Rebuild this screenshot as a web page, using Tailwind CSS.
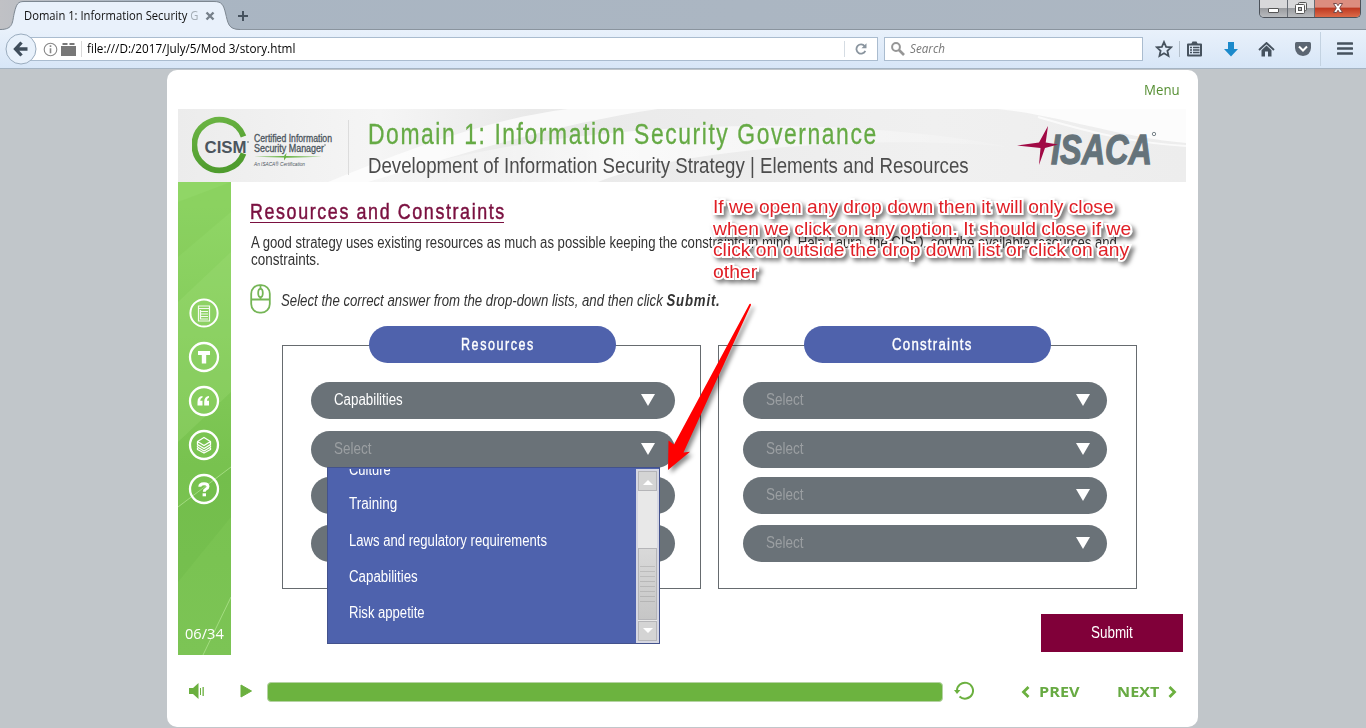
<!DOCTYPE html>
<html lang="en">
<head>
<meta charset="utf-8">
<title>Domain 1: Information Security Governance</title>
<script src="https://cdn.jsdelivr.net/npm/@tailwindcss/browser@4"></script>
</head>
<body class="w-[1366px] h-[728px] overflow-hidden bg-[#c1c6ca] font-['Liberation_Sans_Narrow','Liberation_Sans',sans-serif]">
<!-- Tab strip -->
<header class="relative flex h-[30px] bg-linear-to-r from-[#c0c1c5] via-[#a9b5c2] via-10% to-[#adb7c2] border-b border-[#8a949e] font-['Open_Sans','Noto_Sans',sans-serif]">
  <svg class="absolute left-0 top-0" width="240" height="31" viewBox="0 0 240 31"><path d="M0 29.500C14 29.500 12 22 14.500 12C16.500 4 18 1.500 24 1.500H214C222 1.500 223.500 5 225.500 13C228 23 228 29.500 240 29.500V31H0Z" fill="#e9f1fb"/><path d="M0 29.500C14 29.500 12 22 14.500 12C16.500 4 18 1.500 24 1.500H214C222 1.500 223.500 5 225.500 13C228 23 228 29.500 240 29.500" fill="none" stroke="#7d8791"/></svg>
  <div class="relative ml-6 mt-[7px] w-[175px] h-[18px] leading-[18px] text-[12px] text-[#111]"><span data-w="175" class="inline-block origin-left whitespace-nowrap">Domain 1: Information Security <span class="text-[#a5adb5]">G</span></span></div>
  <svg class="relative ml-[6px] mt-[11px]" width="10" height="10" viewBox="0 0 10 10"><path d="M1.500 1.500L8.500 8.500M8.500 1.500L1.500 8.500" stroke="#76808a" stroke-width="2.400"/></svg>
  <svg class="relative ml-[23px] mt-[11px]" width="10" height="10" viewBox="0 0 10 10"><path d="M5 0V10M0 5H10" stroke="#46525e" stroke-width="2"/></svg>
  <div class="ml-auto mr-[5px] flex h-[18px] w-[102px] rounded-b-[5px] border border-t-0 border-[#4c525a] overflow-hidden">
    <div class="w-[28px] border-r border-[#666c74] bg-linear-to-b from-[#d8d8da] from-45% via-[#9a9ca0] via-50% to-[#b9bbbe] flex items-end justify-center pb-1"><span class="block w-[11px] h-[5px] bg-white border border-[#555] rounded-[1px]"></span></div>
    <div class="w-[27px] border-r border-[#666c74] bg-linear-to-b from-[#d8d8da] from-45% via-[#9a9ca0] via-50% to-[#b9bbbe] flex items-start justify-center pt-[2px]"><svg width="12" height="12" viewBox="0 0 12 12"><rect x="3.500" y=".5" width="8" height="8" rx="1" fill="#eee" stroke="#555"/><rect x=".5" y="2.500" width="9" height="9" rx="1" fill="#fff" stroke="#555"/><rect x="3.500" y="5.500" width="3" height="3" fill="#bbb" stroke="#555"/></svg></div>
    <div class="flex-1 bg-linear-to-b from-[#dc8d7f] from-40% via-[#bf3a22] via-50% to-[#dc6a49] flex items-start justify-center pt-[3px]"><svg width="12" height="10" viewBox="0 0 12 10"><path d="M1.500 .5H4.500L6 2.700L7.500 .5H10.500L7.700 5L10.500 9.500H7.500L6 7.200L4.500 9.500H1.500L4.300 5Z" fill="#fff" stroke="#6b4040" stroke-width=".9"/></svg></div>
  </div>
</header>
<!-- Navigation bar -->
<nav class="relative flex items-center h-[39px] bg-linear-to-b from-[#e9f1fb] to-[#d7e6f7] border-b border-[#a5b4c3] font-['Open_Sans','Noto_Sans',sans-serif]">
  <div class="ml-5 w-[858px] h-6 bg-white border border-[#aabccf] flex items-center">
    <svg class="ml-[22px]" width="15" height="15" viewBox="0 0 15 15"><circle cx="7.500" cy="7.500" r="6.300" fill="none" stroke="#888" stroke-width="1.100"/><path d="M7.500 3.300V5M7.500 6.300V11.300" stroke="#888" stroke-width="1.600"/></svg>
    <svg class="ml-[3px]" width="15" height="13" viewBox="0 0 15 13"><path d="M0 3H15V13H0ZM1.500 0H6.500V2H1.500ZM8.500 0H13.500V2H8.500Z" fill="#777"/></svg>
    <span class="ml-[5px] w-px h-4 bg-[#d9d9d9]"></span>
    <div class="ml-[5px] w-[208px] h-[18px] leading-[18px] text-[12px] text-black"><span data-w="208" class="inline-block origin-left whitespace-nowrap">file:///D:/2017/July/5/Mod 3/story.html</span></div>
    <span class="ml-auto w-px h-4 bg-[#d5dce3]"></span>
    <svg class="ml-[10px] mr-[10px]" width="12" height="12" viewBox="0 0 12 12"><path d="M9.700 3.200A4.600 4.600 0 1 0 10.300 7.800" fill="none" stroke="#8a959f" stroke-width="1.800"/><path d="M11.500 .3V5.300H6.500Z" fill="#8a959f"/></svg>
  </div>
  <svg class="absolute left-[5px] top-[3px]" width="32" height="32" viewBox="0 0 32 32"><circle cx="16" cy="16" r="15" fill="#e8f1fb" stroke="#9aacbe"/><path d="M16.500 9.500L10.500 16L16.500 22.500M11 16H22.500" stroke="#404e5c" stroke-width="3.300" fill="none"/></svg>
  <div class="ml-[6px] w-[259px] h-6 bg-white border border-[#aabccf] flex items-center">
    <svg class="ml-[6px]" width="14" height="14" viewBox="0 0 14 14"><circle cx="5" cy="5" r="3.900" fill="none" stroke="#969696" stroke-width="2"/><path d="M8 8L13 13" stroke="#969696" stroke-width="2.600"/></svg>
    <div class="ml-[5px] w-[35px] h-[18px] leading-[18px] text-[12px] italic text-[#777]"><span data-w="35" class="inline-block origin-left whitespace-nowrap">Search</span></div>
  </div>
  <svg class="ml-[12px]" width="18" height="18" viewBox="0 0 18 18"><path d="M9 2L11.100 6.800L16.200 7.300L12.400 10.800L13.500 15.900L9 13.200L4.500 15.900L5.600 10.800L1.800 7.300L6.900 6.800Z" fill="none" stroke="#46525e" stroke-width="1.800"/></svg>
  <span class="ml-[6px] w-px h-4 bg-[#b3bfcb]"></span>
  <svg class="ml-[7px]" width="15" height="16" viewBox="0 0 15 16"><path d="M1 3.500H14V14.500H1Z" fill="none" stroke="#46525e" stroke-width="2" stroke-linejoin="round"/><path d="M4 3.500L5.500 .5H9.500L11 3.500Z" fill="#46525e"/><path d="M3 6.500H5M6 6.500H12.500M3 9H5M6 9H12.500M3 11.500H5M6 11.500H12.500" stroke="#46525e" stroke-width="1.400"/></svg>
  <svg class="ml-[22px]" width="14" height="15" viewBox="0 0 14 15"><path d="M4 0H10V7H14L7 14.500L0 7H4Z" fill="#1c8acb"/></svg>
  <svg class="ml-[20px]" width="17" height="15" viewBox="0 0 17 15"><path d="M1 8L8.500 1L16 8" fill="none" stroke="#46525e" stroke-width="1.900"/><path d="M3.500 8.200L8.500 3.600L13.500 8.200V14.500H10V9.500H7V14.500H3.500Z" fill="#46525e"/></svg>
  <svg class="ml-[20px]" width="16" height="14" viewBox="0 0 16 14"><path d="M1.500 0H14.500Q16 0 16 1.500V6Q15.500 13 8 14Q.5 13 0 6V1.500Q0 0 1.500 0Z" fill="#5c6672"/><path d="M4 4.500L8 8.500L12 4.500" fill="none" stroke="#fff" stroke-width="2"/></svg>
  <span class="ml-[9px] w-px h-[34px] bg-[#c3d2e1]"></span>
  <svg class="ml-[16px]" width="16" height="14" viewBox="0 0 16 14"><path d="M1 1.500H15M1 6.500H15M1 11.500H15" stroke="#46525e" stroke-width="2.600" stroke-linecap="round"/></svg>
</nav>
<!-- Course player -->
<main class="relative mt-px ml-[167px] w-[1031px] h-[657px] rounded-[10px] bg-white px-[11px]">
  <div class="h-[39px] flex justify-end pr-[6px] pt-[10px] font-['Open_Sans','Noto_Sans',sans-serif] text-[14px] leading-5 text-[#568f33]"><div class="w-[37px]"><span data-w="36" class="inline-block origin-left whitespace-nowrap">Menu</span></div></div>
  <!-- Banner -->
  <div class="relative w-[1008px] h-[73px] overflow-hidden">
    <svg class="absolute inset-0" width="1008" height="73" viewBox="0 0 1008 73"><defs><linearGradient id="bg" x2="1"><stop stop-color="#ececec"/><stop offset=".2" stop-color="#f5f5f5"/><stop offset=".35" stop-color="#e9e9e9"/><stop offset=".75" stop-color="#f0f0f0"/><stop offset="1" stop-color="#ededed"/></linearGradient><linearGradient id="sw" x2="1"><stop stop-color="#fff" stop-opacity="0"/><stop offset=".4" stop-color="#fff" stop-opacity=".75"/><stop offset="1" stop-color="#fff" stop-opacity=".1"/></linearGradient></defs><rect width="1008" height="73" fill="url(#bg)"/><path d="M150 73C230 40 310 10 390 0H480C380 15 300 40 190 73Z" fill="#fff" opacity=".7"/><path d="M190 73C400 0 700 10 830 38C700 25 500 40 420 73Z" fill="url(#sw)"/><path d="M820 0C880 6 940 28 1008 34V0Z" fill="#fcfcfc"/><path d="M860 8C920 26 960 34 1008 37" stroke="#fff" stroke-width="2" fill="none" opacity=".7"/></svg>
    <div class="relative flex h-full">
      <svg class="ml-[14px] mt-[7px]" width="146" height="60" viewBox="0 0 146 60"><defs><linearGradient id="ring" x2=".3" y2="1"><stop stop-color="#6cb544"/><stop offset="1" stop-color="#4f9c2e"/></linearGradient></defs><path d="M51.500 20.500A25.300 25.300 0 1 0 51.500 37.500" fill="none" stroke="url(#ring)" stroke-width="5.800"/><g font-family="'Liberation Sans Narrow','Liberation Sans',sans-serif" fill="#4b555d"><text x="12.500" y="36.500" font-size="16.500" font-weight="bold" textLength="42" lengthAdjust="spacingAndGlyphs" font-family="Liberation Sans">CISM</text><circle cx="56" cy="26" r=".8"/><text x="62" y="25.500" font-size="10" stroke="#4b555d" stroke-width=".3" textLength="78" lengthAdjust="spacingAndGlyphs">Certified Information</text><text x="62" y="36" font-size="10" stroke="#4b555d" stroke-width=".3" textLength="70" lengthAdjust="spacingAndGlyphs">Security Manager</text><circle cx="133" cy="29" r=".7"/><text x="62" y="50" font-size="5.500" font-style="italic" textLength="51" lengthAdjust="spacingAndGlyphs">An ISACA® Certification</text></g><path d="M62 40.800L92 40L94.500 37L94 40L130 40.800L94 41.800L92 44.500V41.500Z" fill="#6ab344"/></svg>
      <span class="ml-[10px] mt-[11px] w-px h-[55px] bg-[#dcdcdc]"></span>
      <div class="ml-[19px] w-[602px] pt-[9px]">
        <div class="h-[32px] leading-[32px] text-[29px] text-[#66aa45]"><span data-w="508" class="inline-block origin-left whitespace-nowrap tracking-[2px] [-webkit-text-stroke:0.3px_#66aa45]">Domain 1: Information Security Governance</span></div>
        <div class="h-[32px] leading-[32px] text-[22px] text-[#4c4c4c]"><span data-w="601" class="inline-block origin-left whitespace-nowrap">Development of Information Security Strategy | Elements and Resources</span></div>
      </div>
      <svg class="ml-[47px] mt-[13px]" width="142" height="46" viewBox="0 0 142 46"><text x="34" y="41.500" font-family="Liberation Sans" font-weight="bold" font-style="italic" font-size="42.500" fill="#65737a" stroke="#65737a" stroke-width="1.300" textLength="101" lengthAdjust="spacingAndGlyphs">ISACA</text><circle cx="137" cy="12" r="1.700" fill="none" stroke="#7a858b"/><path d="M0 23.500L22 20.500L31 4L28.700 20.500L41 22.500L28 26L22 43L23.500 26Z" fill="#a10a45"/></svg>
    </div>
  </div>
  <div class="flex h-[473px]">
    <!-- Sidebar -->
    <aside class="relative flex flex-col items-center w-[53px] h-[473px] overflow-hidden bg-linear-to-b from-[#90d666] from-5% via-[#78c24f] via-60% to-[#7cc455]">
      <svg class="absolute inset-0" width="53" height="473" viewBox="0 0 53 473"><path d="M0 120L53 70V210L0 260Z" fill="#a3e07a" opacity=".25"/><path d="M0 20L53 0V30L0 75Z" fill="#6fba46" opacity=".15"/><path d="M0 325L53 285V335L0 400Z" fill="#6ab545" opacity=".3"/><path d="M0 325L53 285M25 473L53 415" stroke="#a3dc80" stroke-width="1"/></svg>
      <div class="relative mt-[115px] mr-[2px] flex flex-col gap-[12px] w-8">
        <svg width="32" height="32" viewBox="0 0 32 32" fill="none" stroke="#fff"><circle cx="16" cy="16" r="13.600" stroke-width="2"/><g stroke-width="1.200" opacity=".9"><path d="M10.500 9H21.500V24H10.500ZM10.500 11.500H21.500M13 14.500H20M13 17H20M13 19.500H20M13 22H20M12.500 13V22.500"/></g></svg>
        <svg width="32" height="32" viewBox="0 0 32 32"><circle cx="16" cy="16" r="14" fill="none" stroke="#fff" stroke-width="2.300"/><path d="M10 10H22V14H18.200V22.500H13.800V14H10Z" fill="#fff"/></svg>
        <svg width="32" height="32" viewBox="0 0 32 32"><circle cx="16" cy="16" r="14" fill="none" stroke="#fff" stroke-width="2.300"/><path d="M14.500 11Q9.500 11.500 9.500 17V20.500H14.500V15.800H12.200Q12.200 13.300 14.500 12.500ZM21 11Q16.200 11.500 16.200 17V20.500H21V15.800H18.900Q18.900 13.300 21 12.500Z" fill="#fff"/></svg>
        <svg width="32" height="32" viewBox="0 0 32 32" fill="none" stroke="#fff"><circle cx="16" cy="16" r="14" stroke-width="2.300"/><path d="M9.500 12.500L16 8.500L22.500 12.500L16 16.500ZM9.500 12.500V15.500L16 19.500L22.500 15.500V12.500M9.500 16.500V18L16 22L22.500 18V16.500M9.500 19V20.500L16 24L22.500 20.500V19" stroke-width="1.300" stroke-linejoin="round"/></svg>
        <svg width="32" height="32" viewBox="0 0 32 32"><circle cx="16" cy="16" r="14" fill="none" stroke="#fff" stroke-width="2.300"/><path d="M11.800 13.800Q11.800 10.800 16 10.800Q20 10.800 20 13.600Q20 15.200 17.800 16.200Q16.300 17 16.300 18.800" fill="none" stroke="#fff" stroke-width="3"/><rect x="14.600" y="20.300" width="3.400" height="3" fill="#fff"/></svg>
      </div>
      <div class="relative mt-auto mb-[12px] w-[39px] h-5 leading-5 font-['Open_Sans',sans-serif] text-[15px] text-white"><span data-w="39" class="inline-block origin-left whitespace-nowrap">06/34</span></div>
    </aside>
    <!-- Slide content -->
    <section class="relative w-[955px] text-[#333]">
      <h1 class="ml-[19px] mt-[18px] w-[254px] h-[23px] border-b-[1.5px] border-[#7a1040] leading-[24px] text-[22px] font-normal text-[#7a1040]"><span data-w="254" class="inline-block origin-left whitespace-nowrap tracking-[2px] [-webkit-text-stroke:0.5px_#7a1040]">Resources and Constraints</span></h1>
      <div class="ml-[20px] mt-[11px] h-[34px] text-[16px] leading-[17px]">
        <div class="h-[17px]"><span data-w="866" class="inline-block origin-left whitespace-nowrap">A good strategy uses existing resources as much as possible keeping the constraints in mind. Help Laura, the CISO, sort the available resources and</span></div>
        <div class="h-[17px]"><span data-w="69" class="inline-block origin-left whitespace-nowrap">constraints.</span></div>
      </div>
      <div class="ml-[19px] mt-[15px] flex h-[32px] items-center">
        <svg width="21" height="30" viewBox="0 0 21 30" fill="none" stroke="#75b556" stroke-width="1.800"><rect x="1.200" y="1.200" width="18.600" height="27.400" rx="8.500"/><path d="M1.500 15.500H19.500M10.500 1V5M10.500 13V15"/><ellipse cx="10.500" cy="9" rx="2.300" ry="4.200"/></svg>
        <div class="ml-[10px] mt-[3px] w-[440px] h-[20px] leading-[20px] text-[16px] italic"><span data-w="440" class="inline-block origin-left whitespace-nowrap">Select the correct answer from the drop-down lists, and then click <b class="tracking-[1px]">Submit.</b></span></div>
      </div>
      <div class="ml-[51px] mt-[11px] flex gap-[17px]">
        <!-- Resources -->
        <div class="w-[419px]">
          <div class="relative z-10 ml-[87px] w-[247px] h-[37px] rounded-full bg-[#4f62ac] pl-[92px] pt-[10px] text-white text-[16px] leading-[18px]"><span data-w="72" class="inline-block origin-left whitespace-nowrap tracking-[2px] [-webkit-text-stroke:0.4px_#fff]">Resources</span></div>
          <div class="-mt-[18px] h-[244px] border border-[#666b6f] pt-[36px] pl-[28px] text-[16px] leading-[18px]">
            <div class="flex w-[364px] h-[37px] mb-[12px] items-center rounded-full bg-[#6a7278] pl-[23px] pr-[19px] pb-[1px] text-white"><span data-w="69" class="inline-block origin-left whitespace-nowrap">Capabilities</span><svg class="ml-auto" width="16" height="12" viewBox="0 0 16 12"><path d="M1 0H15L8 12Z" fill="#fff"/></svg></div>
            <div class="flex w-[364px] h-[37px] mb-[9px] items-center rounded-full bg-[#6a7278] pl-[23px] pr-[19px] pb-[1px] text-[#9b9fa2]"><span data-w="37" class="inline-block origin-left whitespace-nowrap">Select</span><svg class="ml-auto" width="16" height="12" viewBox="0 0 16 12"><path d="M1 0H15L8 12Z" fill="#fff"/></svg></div>
            <div class="w-[364px] h-[37px] mb-[11px] rounded-full bg-[#6a7278]"></div>
            <div class="w-[364px] h-[37px] rounded-full bg-[#6a7278]"></div>
          </div>
        </div>
        <!-- Constraints -->
        <div class="w-[419px]">
          <div class="relative z-10 mx-auto w-[247px] h-[37px] rounded-full bg-[#4f62ac] pl-[88px] pt-[10px] text-white text-[16px] leading-[18px]"><span data-w="79" class="inline-block origin-left whitespace-nowrap tracking-[1.5px] [-webkit-text-stroke:0.4px_#fff]">Constraints</span></div>
          <div class="-mt-[18px] h-[244px] border border-[#666b6f] pt-[36px] pl-[24px] text-[16px] leading-[18px] text-[#9b9fa2]">
            <div class="flex w-[364px] h-[37px] mb-[12px] items-center rounded-full bg-[#6a7278] pl-[23px] pr-[16px] pb-[1px]"><span data-w="37" class="inline-block origin-left whitespace-nowrap">Select</span><svg class="ml-auto" width="16" height="12" viewBox="0 0 16 12"><path d="M1 0H15L8 12Z" fill="#fff"/></svg></div>
            <div class="flex w-[364px] h-[37px] mb-[9px] items-center rounded-full bg-[#6a7278] pl-[23px] pr-[16px] pb-[1px]"><span data-w="37" class="inline-block origin-left whitespace-nowrap">Select</span><svg class="ml-auto" width="16" height="12" viewBox="0 0 16 12"><path d="M1 0H15L8 12Z" fill="#fff"/></svg></div>
            <div class="flex w-[364px] h-[37px] mb-[11px] items-center rounded-full bg-[#6a7278] pl-[23px] pr-[16px] pb-[1px]"><span data-w="37" class="inline-block origin-left whitespace-nowrap">Select</span><svg class="ml-auto" width="16" height="12" viewBox="0 0 16 12"><path d="M1 0H15L8 12Z" fill="#fff"/></svg></div>
            <div class="flex w-[364px] h-[37px] items-center rounded-full bg-[#6a7278] pl-[23px] pr-[16px] pb-[1px]"><span data-w="37" class="inline-block origin-left whitespace-nowrap">Select</span><svg class="ml-auto" width="16" height="12" viewBox="0 0 16 12"><path d="M1 0H15L8 12Z" fill="#fff"/></svg></div>
          </div>
        </div>
      </div>
      <div class="mt-[25px] ml-auto mr-[3px] w-[142px] h-[38px] bg-[#800039] pl-[50px] pt-[10px] text-[16px] leading-[18px] text-white"><span data-w="42" class="inline-block origin-left whitespace-nowrap">Submit</span></div>
      <!-- Open drop-down list -->
      <div class="absolute z-20 left-[96px] top-[285px] w-[333px] h-[177px] flex bg-[#4e62ad] border border-[#43528c] text-[16px] text-white">
        <div class="w-[308px] h-[175px] overflow-hidden pl-[21px] pt-px">
          <div class="h-[17px] overflow-hidden"><div class="-mt-[8px] h-[18px] leading-[18px]"><span data-w="42" class="inline-block origin-left whitespace-nowrap">Culture</span></div></div>
          <div class="h-[36px] leading-[36px]"><span data-w="48" class="inline-block origin-left whitespace-nowrap">Training</span></div>
          <div class="h-[37px] leading-[37px]"><span data-w="198" class="inline-block origin-left whitespace-nowrap">Laws and regulatory requirements</span></div>
          <div class="h-[35px] leading-[35px]"><span data-w="69" class="inline-block origin-left whitespace-nowrap">Capabilities</span></div>
          <div class="h-[37px] leading-[37px]"><span data-w="76" class="inline-block origin-left whitespace-nowrap">Risk appetite</span></div>
        </div>
        <div class="mt-px flex flex-col w-[23px] h-[174px] bg-[#e8e8e8] border-2 border-[#d6d7e2]">
          <div class="h-[20px] border border-[#b5b5b8] bg-[#d4d4d4] flex items-center justify-center pt-1"><svg width="10" height="6" viewBox="0 0 10 6"><path d="M5 0L10 5H0Z" fill="#fff"/></svg></div>
          <div class="mt-[57px] h-[72px] border border-[#b5b5b8] bg-linear-to-b from-[#d9d9d9] to-[#c6c6c6] flex flex-col items-center justify-center gap-[4px]">
            <i class="block w-[15px] h-px bg-[#bcbcbc]"></i><i class="block w-[15px] h-px bg-[#bcbcbc]"></i><i class="block w-[15px] h-px bg-[#bcbcbc]"></i><i class="block w-[15px] h-px bg-[#b8b8b8]"></i><i class="block w-[15px] h-px bg-[#b8b8b8]"></i><i class="block w-[15px] h-px bg-[#b8b8b8]"></i><i class="block w-[15px] h-px bg-[#b5b5b5]"></i><i class="block w-[15px] h-px bg-[#b5b5b5]"></i>
          </div>
          <div class="mt-px flex-1 border border-[#b5b5b8] bg-[#d4d4d4] flex items-center justify-center"><svg width="10" height="6" viewBox="0 0 10 6"><path d="M5 5L10 0H0Z" fill="#fff"/></svg></div>
        </div>
      </div>
    </section>
  </div>
  <!-- Player controls -->
  <footer class="flex items-center h-[72px] text-[#67aa42] font-['Open_Sans','Noto_Sans',sans-serif]">
    <svg class="ml-[11px]" width="16" height="16" viewBox="0 0 16 16" fill="#6bb03f"><path d="M0 5H4L9.500 0V16L4 11H0Z"/><path d="M11 5H12V12H11ZM13.500 4H14.800V13H13.500Z"/></svg>
    <svg class="ml-[35px]" width="12" height="14" viewBox="0 0 12 14"><path d="M1 1V13L11.500 7Z" fill="#6bb03f" stroke="#6bb03f" stroke-linejoin="round"/></svg>
    <div class="ml-[15px] w-[676px] h-5 rounded-[4px] bg-[#6cb33f] border border-[#b5d3a3] mt-px"></div>
    <svg class="ml-[11px]" width="20" height="20" viewBox="0 0 20 20"><path d="M3 10A8 8 0 1 1 5.500 15.500" fill="none" stroke="#6bb03f" stroke-width="2"/><path d="M0 9H6.500L3 13Z" fill="#6bb03f"/></svg>
    <svg class="ml-[47px] mt-[2px]" width="9" height="12" viewBox="0 0 9 12"><path d="M7.500 1L2.500 6L7.500 11" fill="none" stroke="#6bb03f" stroke-width="2.800"/></svg>
    <div class="ml-[9px] w-[40px] h-5 leading-5 text-[15px] font-bold"><span data-w="40" class="inline-block origin-left whitespace-nowrap">PREV</span></div>
    <div class="ml-[38px] w-[42px] h-5 leading-5 text-[15px] font-bold"><span data-w="42" class="inline-block origin-left whitespace-nowrap">NEXT</span></div>
    <svg class="ml-[9px] mt-[2px]" width="9" height="12" viewBox="0 0 9 12"><path d="M1.500 1L6.500 6L1.500 11" fill="none" stroke="#6bb03f" stroke-width="2.800"/></svg>
  </footer>
  <!-- Reviewer annotation -->
  <svg class="absolute z-30 left-[493px] top-[226px] overflow-visible [filter:drop-shadow(3px_3px_2px_rgba(0,0,0,0.45))]" width="100" height="180" viewBox="0 0 100 180"><path d="M89.500 8Q91 7 91 9L23.500 156.500L30 155.700L8 174L8.500 144.500L14 148.500Z" fill="#f00"/></svg>
  <div class="absolute z-30 left-[546px] top-[126px] w-[430px] font-['Liberation_Sans',sans-serif] text-[18.500px] text-[#e01f26] [paint-order:stroke_fill] [-webkit-text-stroke:4px_#fff] [filter:drop-shadow(3px_3px_2px_rgba(0,0,0,0.5))]">
    <div class="h-[21.600px] leading-[21.600px]"><span data-w="401" class="inline-block origin-left whitespace-nowrap">If we open any drop down then it will only close</span></div>
    <div class="h-[21.600px] leading-[21.600px]"><span data-w="418" class="inline-block origin-left whitespace-nowrap">when we click on any option. It should close if we</span></div>
    <div class="h-[21.600px] leading-[21.600px]"><span data-w="416" class="inline-block origin-left whitespace-nowrap">click on outside the drop down list or click on any</span></div>
    <div class="h-[21.600px] leading-[21.600px]"><span data-w="44" class="inline-block origin-left whitespace-nowrap">other</span></div>
  </div>
</main>
<script>
function fit(el) {
  var spacing = parseFloat(getComputedStyle(el).letterSpacing) || 0;
  el.style.transform = 'scaleX(' + (el.dataset.w / (el.offsetWidth - spacing)) + ')';
}
var watcher = new ResizeObserver(function (entries) {
  entries.forEach(function (e) { fit(e.target); });
});
document.querySelectorAll('[data-w]').forEach(function (el) { watcher.observe(el); });
window.addEventListener('load', function () { document.querySelectorAll('[data-w]').forEach(fit); });
</script>
</body>
</html>
